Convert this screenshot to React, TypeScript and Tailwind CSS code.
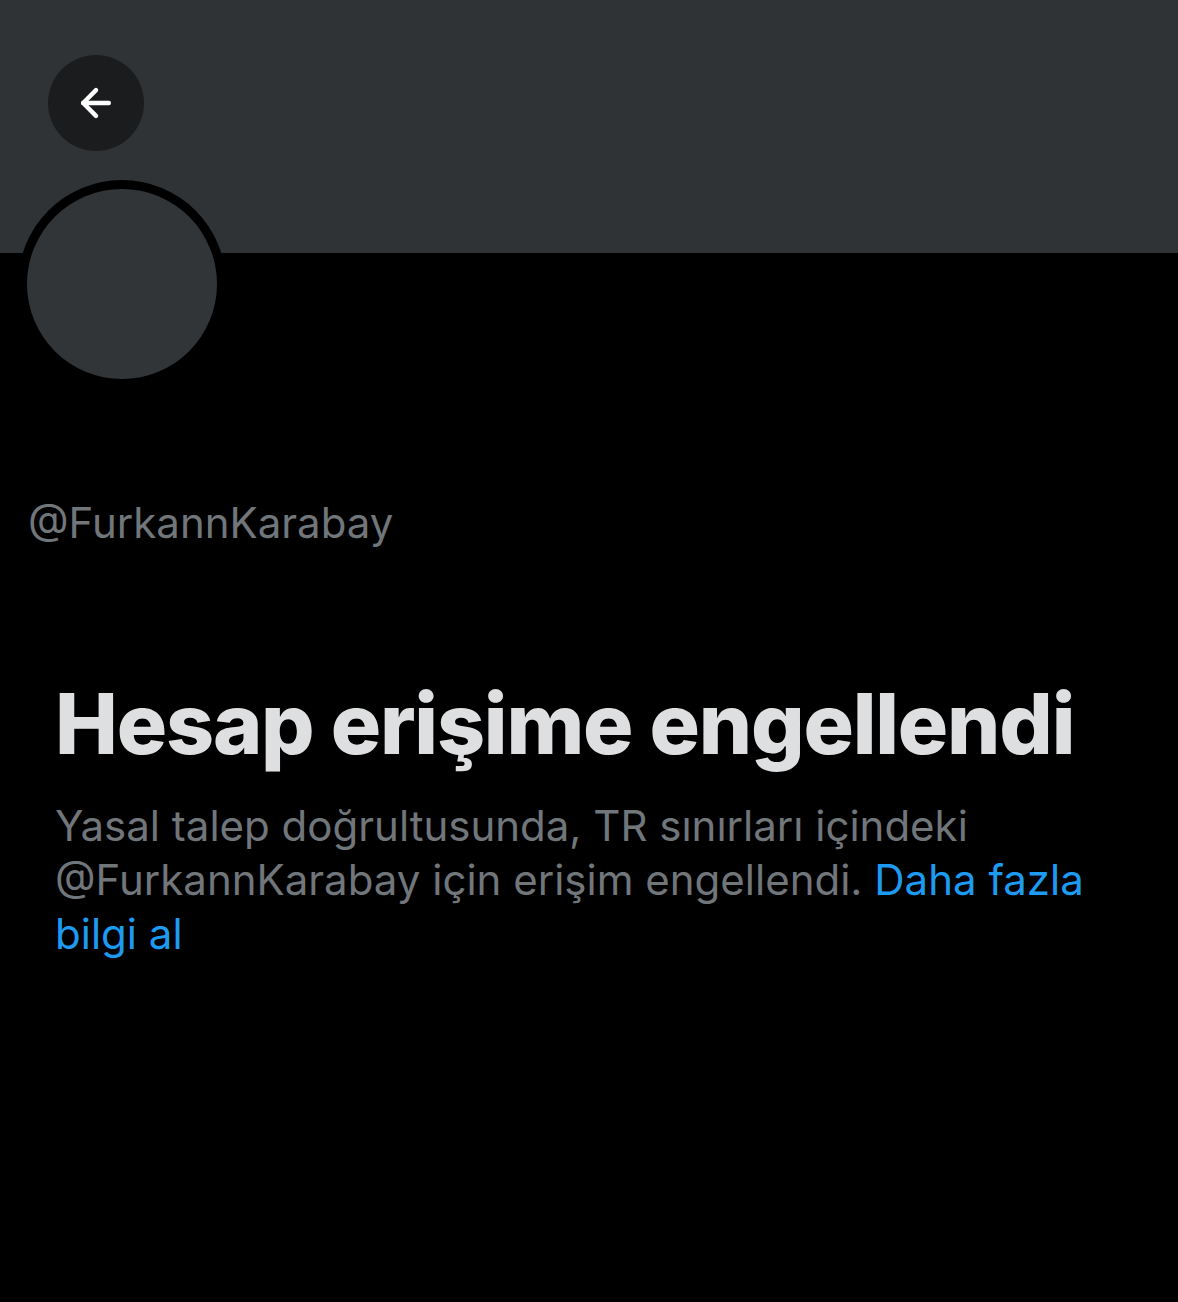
import { ArrowLeft } from "lucide-react";

export default function App() {
  return (
    <div
      className="min-h-[1302px] w-full bg-black"
      style={{ fontFamily: "Inter, 'Noto Sans', sans-serif" }}
    >
      {/* Banner */}
      <div className="h-[253px] bg-[#2f3336] pt-[55px] pl-[48px]">
        <button className="flex h-[96px] w-[96px] items-center justify-center rounded-full bg-[#1b1c1e] text-white">
          <ArrowLeft size={44} strokeWidth={2.4} />
        </button>
      </div>

      {/* Avatar */}
      <div className="relative h-[0px]">
        <div className="absolute left-[18px] top-[-73px] flex h-[208px] w-[208px] items-center justify-center rounded-full bg-black">
          <div className="h-[190px] w-[190px] rounded-full bg-[#313538]" />
        </div>
      </div>

      <div className="pt-[245px] pl-[28px]">
        <p className="text-[42px] leading-[50px] text-[#71767b]">@FurkannKarabay</p>
      </div>

      <div className="pt-[126px] pl-[55px] pr-[40px]">
        <h1 className="text-[84px] font-extrabold leading-[100px] tracking-[-1.2px] text-[#dedfe0]">
          Hesap erişime engellendi
        </h1>
        <p className="mt-[25px] text-[42px] leading-[54px] text-[#71767b]">
          Yasal talep doğrultusunda, TR sınırları içindeki
          <br />
          @FurkannKarabay için erişim engellendi.{" "}
          <span className="text-[#1d9bf0]">Daha fazla</span>
          <br />
          <span className="text-[#1d9bf0]">bilgi al</span>
        </p>
      </div>
    </div>
  );
}
